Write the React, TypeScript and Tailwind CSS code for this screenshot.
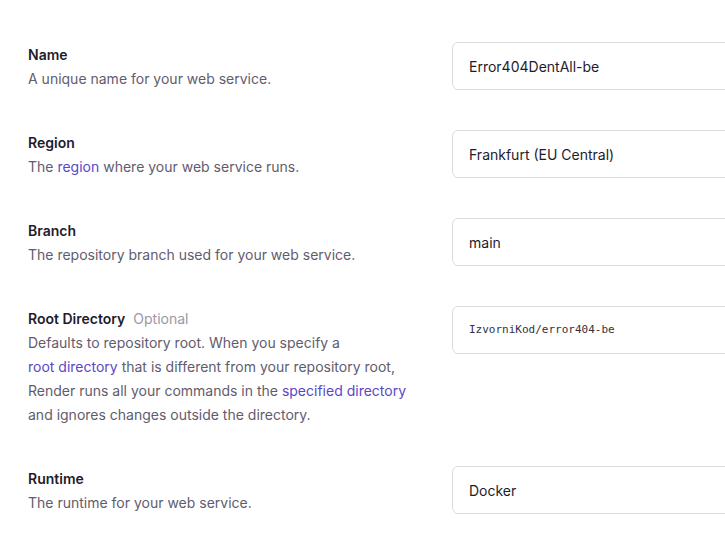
import React from 'react';

type Part = string | { link: string };

type Field = {
  label: string;
  optional?: boolean;
  lines: Part[][];
  value: string;
  mono?: boolean;
};

const FIELDS: Field[] = [
  { label: 'Name', lines: [['A unique name for your web service.']], value: 'Error404DentAll-be' },
  { label: 'Region', lines: [['The ', { link: 'region' }, ' where your web service runs.']], value: 'Frankfurt (EU Central)' },
  { label: 'Branch', lines: [['The repository branch used for your web service.']], value: 'main' },
  {
    label: 'Root Directory',
    optional: true,
    lines: [
      ['Defaults to repository root. When you specify a'],
      [{ link: 'root directory' }, ' that is different from your repository root,'],
      ['Render runs all your commands in the ', { link: 'specified directory' }],
      ['and ignores changes outside the directory.'],
    ],
    value: 'IzvorniKod/error404-be',
    mono: true,
  },
  { label: 'Runtime', lines: [['The runtime for your web service.']], value: 'Docker' },
];

function Row({ field }: { field: Field }) {
  return (
    <div className="flex items-start">
      <div className="w-[424px] shrink-0 text-[14px] leading-6">
        <div className="font-semibold text-[#1e1c2c]">
          {field.label}
          {field.optional && <span className="ml-2 font-normal text-[#9a98a6]">Optional</span>}
        </div>
        {field.lines.map((line, li) => (
          <div key={li} className="whitespace-nowrap text-[#5f5c6e]">
            {line.map((p, i) =>
              typeof p === 'string' ? (
                <span key={i}>{p}</span>
              ) : (
                <a key={i} className="text-[#5b47c4]">{p.link}</a>
              )
            )}
          </div>
        ))}
      </div>
      <div className="-mt-px flex h-[48px] w-[320px] shrink-0 items-center rounded-md border border-[#dcdbe2] bg-white pl-4">
        {field.mono ? (
          <span className="font-['DejaVu_Sans_Mono',monospace] text-[11px] text-[#333240]">{field.value}</span>
        ) : (
          <span className="text-[14px] text-[#1e1c2c]">{field.value}</span>
        )}
      </div>
    </div>
  );
}

export default function App() {
  return (
    <div className="h-[554px] w-[725px] overflow-hidden bg-white font-['Inter',sans-serif]">
      <div className="flex flex-col gap-10 pl-7 pt-[43px]">
        {FIELDS.map((f) => (
          <Row key={f.label} field={f} />
        ))}
      </div>
    </div>
  );
}
